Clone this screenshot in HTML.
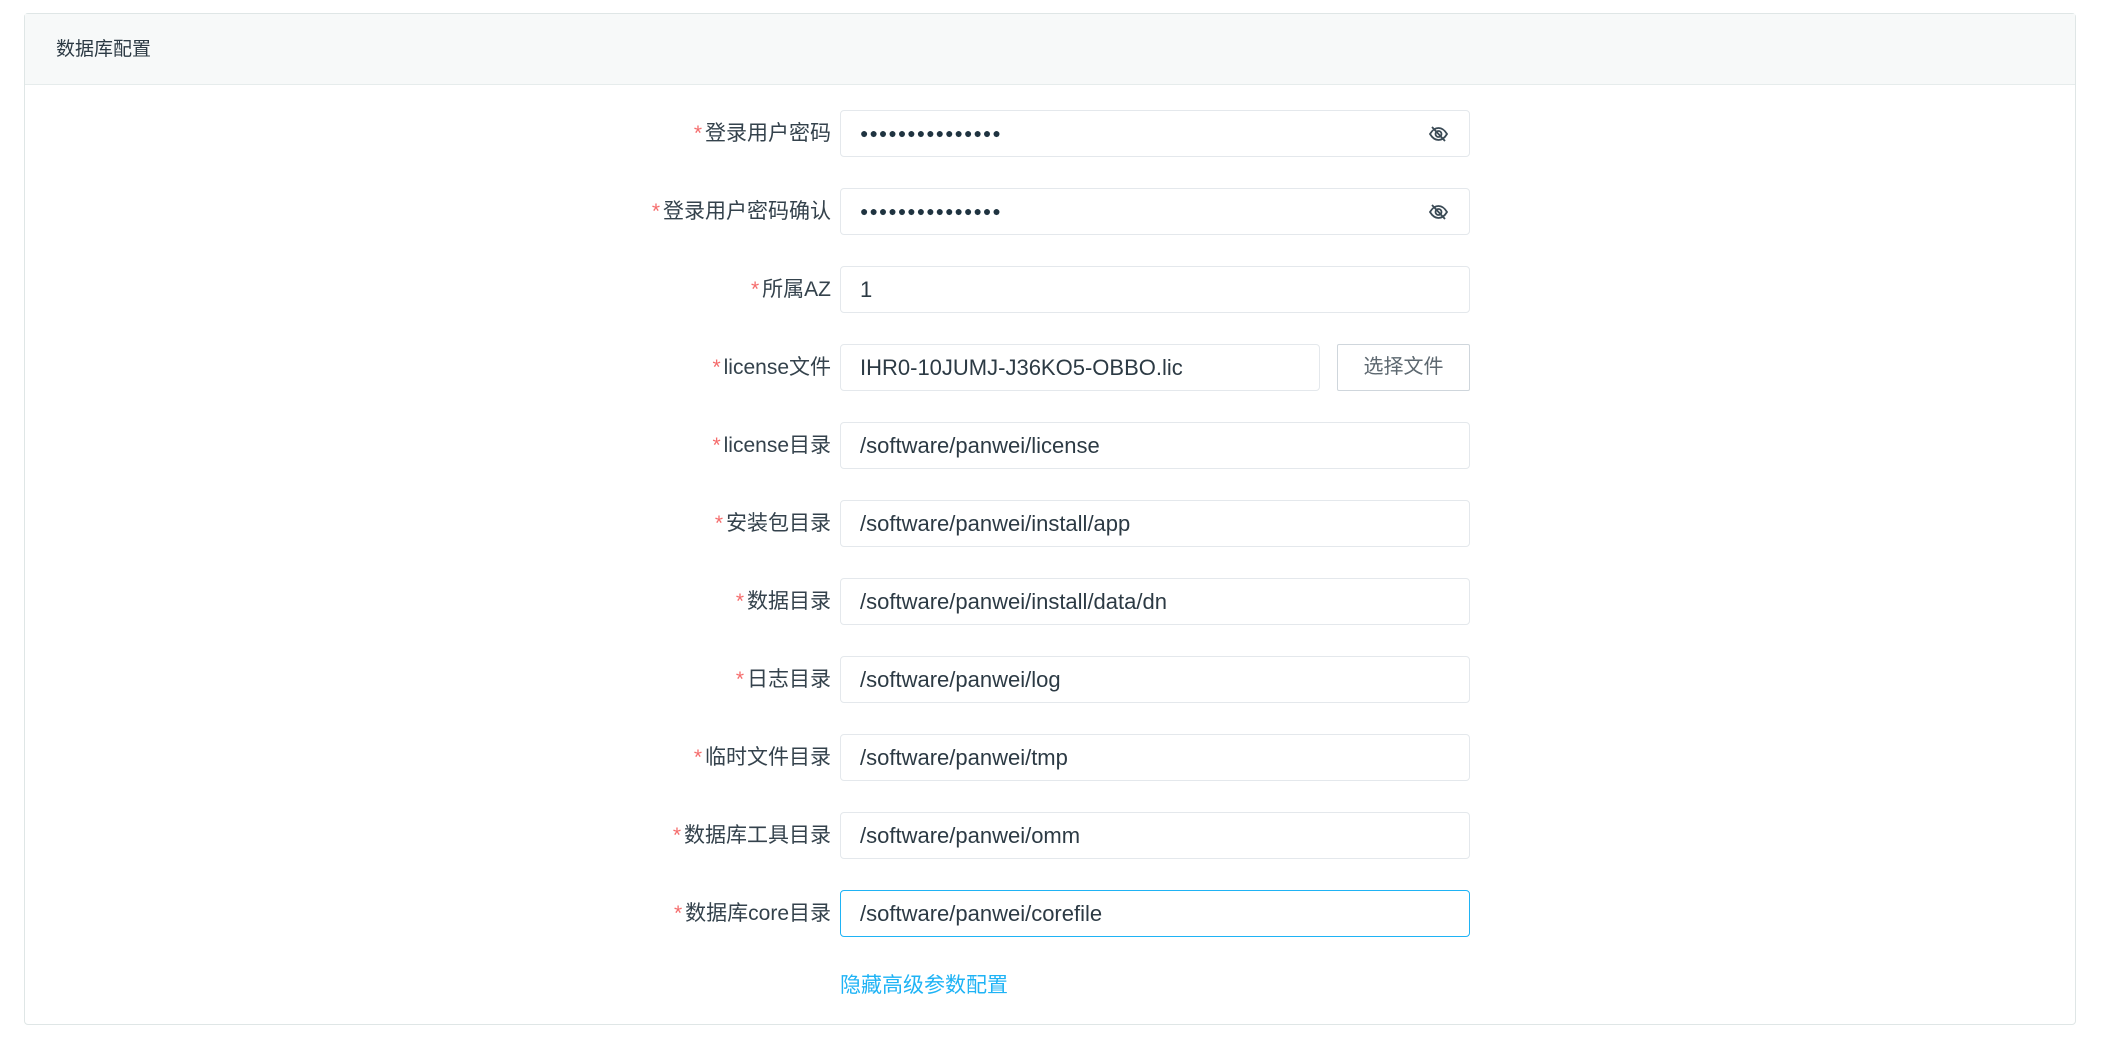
<!DOCTYPE html>
<html><head><meta charset="utf-8"><style>
*{box-sizing:border-box;margin:0;padding:0}
body{width:2101px;height:1038px;background:#fff;font-family:"Liberation Sans","Noto Sans CJK SC",sans-serif;color:#303d47;position:relative;overflow:hidden}
.card{position:absolute;left:24px;top:13px;width:2052px;height:1012px;border:1px solid #dfe6e6;border-radius:4px}
.hd{height:71px;background:#f7f9f9;border-bottom:1px solid #e6ecec;font-size:19px;line-height:71px;padding-left:31px;color:#2c3a44}
.row{position:absolute;left:0;width:2101px;height:47px}
.lab{position:absolute;right:1270px;top:0;line-height:47px;font-size:21px;white-space:nowrap;color:#34424c}
.lab b{color:#f56c6c;font-weight:normal;margin-right:3px}
.inp{position:absolute;left:840px;width:630px;top:0;height:47px;border:1px solid #e4e8ec;border-radius:4px;padding-left:19px;line-height:45px;font-size:22px;color:#2c3a44}
.pw{font-size:14px;letter-spacing:1px;color:#1f3340}
.eye{position:absolute;right:20px;top:13px}
.btn{position:absolute;left:1337px;top:0;width:133px;height:47px;border:1px solid #cfd6dc;border-radius:2px;text-align:center;line-height:45px;font-size:20px;color:#5d6870}
.link{position:absolute;left:840px;top:969px;font-size:21px;color:#1fb3f5}
</style></head><body>
<div class="card"><div class="hd">数据库配置</div></div>
<svg width="0" height="0" style="position:absolute"><defs><g id="e" fill="none" stroke="#3a4a55" stroke-width="1.8"><path d="M2 10C5 5 8 4 10.5 4S16 5 19 10C16 15 13 16 10.5 16S5 15 2 10Z"/><circle cx="10.5" cy="10" r="3"/><path d="M4 3L17 17"/></g></defs></svg>
<div class="row" style="top:110px"><div class="lab"><b>*</b>登录用户密码</div><div class="inp pw">●●●●●●●●●●●●●●●<svg class="eye" width="21" height="20"><use href="#e"/></svg></div></div>
<div class="row" style="top:188px"><div class="lab"><b>*</b>登录用户密码确认</div><div class="inp pw">●●●●●●●●●●●●●●●<svg class="eye" width="21" height="20"><use href="#e"/></svg></div></div>
<div class="row" style="top:266px"><div class="lab"><b>*</b>所属AZ</div><div class="inp">1</div></div>
<div class="row" style="top:344px"><div class="lab"><b>*</b>license文件</div><div class="inp" style="width:480px">IHR0-10JUMJ-J36KO5-OBBO.lic</div><div class="btn">选择文件</div></div>
<div class="row" style="top:422px"><div class="lab"><b>*</b>license目录</div><div class="inp">/software/panwei/license</div></div>
<div class="row" style="top:500px"><div class="lab"><b>*</b>安装包目录</div><div class="inp">/software/panwei/install/app</div></div>
<div class="row" style="top:578px"><div class="lab"><b>*</b>数据目录</div><div class="inp">/software/panwei/install/data/dn</div></div>
<div class="row" style="top:656px"><div class="lab"><b>*</b>日志目录</div><div class="inp">/software/panwei/log</div></div>
<div class="row" style="top:734px"><div class="lab"><b>*</b>临时文件目录</div><div class="inp">/software/panwei/tmp</div></div>
<div class="row" style="top:812px"><div class="lab"><b>*</b>数据库工具目录</div><div class="inp">/software/panwei/omm</div></div>
<div class="row" style="top:890px"><div class="lab"><b>*</b>数据库core目录</div><div class="inp" style="border-color:#1fb3f5">/software/panwei/corefile</div></div>
<div class="link">隐藏高级参数配置</div>
</body></html>
